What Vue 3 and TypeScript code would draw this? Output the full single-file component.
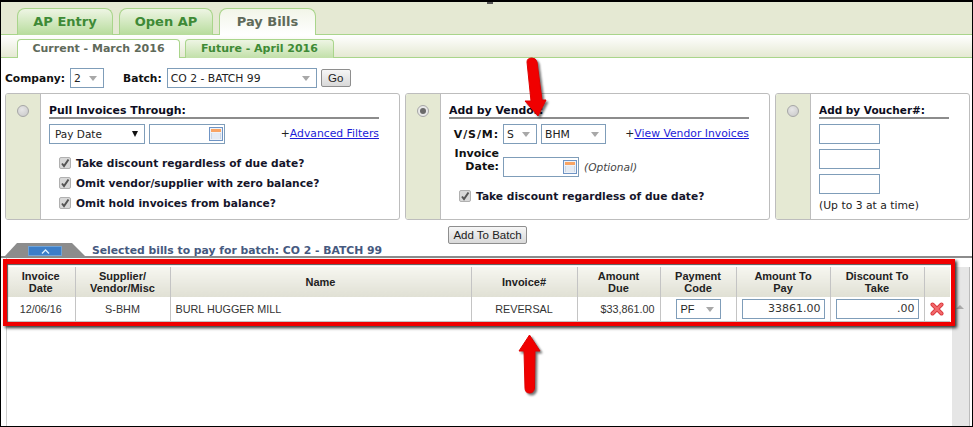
<script setup lang="ts">
const mainTabs = [
  { label: 'AP Entry', active: false },
  { label: 'Open AP', active: false },
  { label: 'Pay Bills', active: true },
]
const subTabs = [
  { label: 'Current - March 2016', active: true },
  { label: 'Future - April 2016', active: false },
]
const pullChecks = [
  'Take discount regardless of due date?',
  'Omit vendor/supplier with zero balance?',
  'Omit hold invoices from balance?',
]
</script>

<template>
  <div class="page">
    <span class="blip"></span>
    <div class="main-tabs">
      <div v-for="t in mainTabs" :key="t.label" class="main-tab" :class="{ active: t.active }">{{ t.label }}</div>
    </div>
    <div class="sub-tabs">
      <div v-for="t in subTabs" :key="t.label" class="sub-tab" :class="{ active: t.active }">{{ t.label }}</div>
    </div>

    <div class="toolbar">
      <b>Company:</b>
      <div class="sel sel-company">2<i class="caret"></i></div>
      <b class="batch-label">Batch:</b>
      <div class="sel sel-batch">CO 2 - BATCH 99<i class="caret"></i></div>
      <div class="btn btn-go">Go</div>
    </div>

    <div class="panels">
      <section class="panel p1">
        <div class="strip"><span class="radio"></span></div>
        <div class="body">
          <h4>Pull Invoices Through:</h4>
          <div class="row">
            <div class="sel sel-paydate">Pay Date<i class="black-caret"></i></div>
            <div class="date date-pull">
              <svg class="cal" width="14" height="14" viewBox="0 0 14 14">
                <rect x="0.5" y="0.5" width="13" height="13" fill="#eef2f8" stroke="#6f94c4" />
                <rect x="2" y="2" width="10" height="3" fill="#f9a463" />
                <path d="M2 7h10M2 9h10M2 11h10" stroke="#a9bbd2" fill="none" />
                <path d="M4 6v6M6 6v6M8 6v6M10 6v6" stroke="#fff" fill="none" />
              </svg>
            </div>
            <span class="link-wrap">+<a>Advanced Filters</a></span>
          </div>
          <div class="checks">
            <label v-for="c in pullChecks" :key="c" class="check">
              <span class="box"><svg width="10" height="10" viewBox="0 0 10 10"><path d="M2 5.500 4 8 8.500 1.500" fill="none" stroke="#555" stroke-width="2" /></svg></span>{{ c }}
            </label>
          </div>
        </div>
      </section>

      <section class="panel p2">
        <div class="strip"><span class="radio on"></span></div>
        <div class="body">
          <h4>Add by Vendor:</h4>
          <div class="row vsm-row">
            <b class="lbl vsm-lbl">V/S/M:</b>
            <div class="sel sel-s">S<i class="caret"></i></div>
            <div class="sel sel-bhm">BHM<i class="caret"></i></div>
            <span class="link-wrap">+<a>View Vendor Invoices</a></span>
          </div>
          <div class="row inv-row">
            <b class="lbl inv-lbl">Invoice<br />Date:</b>
            <div class="date date-inv">
              <svg class="cal" width="14" height="14" viewBox="0 0 14 14">
                <rect x="0.5" y="0.5" width="13" height="13" fill="#eef2f8" stroke="#6f94c4" />
                <rect x="2" y="2" width="10" height="3" fill="#f9a463" />
                <path d="M2 7h10M2 9h10M2 11h10" stroke="#a9bbd2" fill="none" />
                <path d="M4 6v6M6 6v6M8 6v6M10 6v6" stroke="#fff" fill="none" />
              </svg>
            </div>
            <em>(Optional)</em>
          </div>
          <label class="check single">
            <span class="box"><svg width="10" height="10" viewBox="0 0 10 10"><path d="M2 5.500 4 8 8.500 1.500" fill="none" stroke="#555" stroke-width="2" /></svg></span>Take discount regardless of due date?
          </label>
        </div>
      </section>

      <section class="panel p3">
        <div class="strip"><span class="radio"></span></div>
        <div class="body">
          <h4 class="short">Add by Voucher#:</h4>
          <div class="voucher"></div>
          <div class="voucher"></div>
          <div class="voucher"></div>
          <div class="hint">(Up to 3 at a time)</div>
        </div>
      </section>
    </div>

    <div class="add-row"><div class="btn btn-add">Add To Batch</div></div>

    <div class="selected-head">
      <div class="collapse">
        <div class="collapse-btn">
          <svg width="9" height="5" viewBox="0 0 9 5"><path d="M1 4.500 4.500 1 8 4.500" fill="none" stroke="#dff0ff" stroke-width="1.300" /></svg>
        </div>
      </div>
      <div class="selected-title">Selected bills to pay for batch: CO 2 - BATCH 99</div>
    </div>

    <div class="grid-area">
      <div class="grid-wrap">
        <table class="grid">
          <colgroup>
            <col class="c1" /><col class="c2" /><col class="c3" />
            <col class="c4" /><col class="c5" /><col class="c6" />
            <col class="c7" /><col class="c7" /><col class="c8" />
          </colgroup>
          <thead>
            <tr>
              <th>Invoice<br />Date</th>
              <th>Supplier/<br />Vendor/Misc</th>
              <th>Name</th>
              <th>Invoice#</th>
              <th>Amount<br />Due</th>
              <th>Payment<br />Code</th>
              <th>Amount To<br />Pay</th>
              <th>Discount To<br />Take</th>
              <th></th>
            </tr>
          </thead>
          <tbody>
            <tr>
              <td>12/06/16</td>
              <td>S-BHM</td>
              <td class="left">BURL HUGGER MILL</td>
              <td>REVERSAL</td>
              <td class="right">$33,861.00</td>
              <td><div class="sel sel-pf">PF<i class="caret"></i></div></td>
              <td><div class="amt">33861.00</div></td>
              <td><div class="amt">.00</div></td>
              <td>
                <svg class="del" width="14" height="14" viewBox="0 0 14 14">
                  <path d="M2.500 2.500 11.500 11.500M11.500 2.500 2.500 11.500" stroke="#d9363a" stroke-width="4" stroke-linecap="round" />
                  <path d="M2.500 2.500 11.500 11.500M11.500 2.500 2.500 11.500" stroke="#f2696c" stroke-width="2.400" stroke-linecap="round" />
                </svg>
              </td>
            </tr>
          </tbody>
        </table>
        <div class="red-box"></div>
      </div>
      <div class="scroll"><span class="scroll-up"></span></div>
    </div>

    <!-- annotation arrows -->
    <svg class="arrow arrow-down" width="32" height="70" viewBox="0 0 32 70">
      <path d="M7 7Q7 3 12 3 16 3 17 7L22 45 26 45 18 61 5 46 11 46Z" fill="#f00000" stroke="#e00000" stroke-linejoin="round" />
    </svg>
    <svg class="arrow arrow-up" width="32" height="70" viewBox="0 0 32 70">
      <path d="M14.500 5 25 21 20 21 19.500 58Q19 63 14.500 63 10 63 10 58L9 21 4 21Z" fill="#f00000" stroke="#e00000" stroke-linejoin="round" />
    </svg>
  </div>
</template>

<style>
body { margin: 0; background: #000; }
</style>

<style scoped>
.page {
  position: relative;
  width: 973px;
  height: 427px;
  box-sizing: border-box;
  border-style: solid;
  border-color: #000;
  border-width: 2px 1px 1px 1px;
  background: #fff;
  overflow: hidden;
  font-family: "DejaVu Sans", Verdana, sans-serif;
  font-size: 11px;
  color: #111;
}
.blip {
  position: absolute;
  left: 486px;
  top: 0;
  width: 6px;
  height: 2px;
  background: #555;
}

.main-tabs {
  display: flex;
  gap: 6px;
  height: 33px;
  box-sizing: border-box;
  padding: 6px 0 0 16px;
  background: #e5e9d3;
  border-bottom: 1px solid #a9d58b;
}
.main-tab {
  width: 96px;
  height: 27px;
  box-sizing: border-box;
  border: 1px solid #a9d58b;
  border-bottom: 0;
  border-radius: 8px 8px 0 0;
  background: linear-gradient(#eef5e4, #b7dc9c);
  color: #3e8a36;
  font-size: 13px;
  font-weight: bold;
  text-align: center;
  line-height: 26px;
}
.main-tab:nth-child(2) { width: 94px; }
.main-tab:nth-child(3) { width: 97px; }
.main-tab.active {
  background: linear-gradient(#f2f5e8, #fff);
  color: #5f6a5a;
}

.sub-tabs {
  display: flex;
  gap: 5px;
  height: 23px;
  box-sizing: border-box;
  padding: 4px 0 0 16px;
  border-bottom: 1px solid #a9d58b;
  background: linear-gradient(#fff, #e5e9d3);
}
.sub-tab {
  width: 163px;
  height: 19px;
  box-sizing: border-box;
  border: 1px solid #a9d58b;
  border-bottom: 0;
  border-radius: 4px 4px 0 0;
  background: linear-gradient(#eef5e4, #c2e0a9);
  color: #3e8a36;
  font-size: 11px;
  font-weight: bold;
  text-align: center;
  line-height: 17px;
}
.sub-tab:nth-child(2) { width: 149px; }
.sub-tab.active {
  background: #fff;
  color: #5f6a5a;
}

.toolbar {
  display: flex;
  align-items: center;
  height: 20px;
  margin-top: 10px;
  padding-left: 4px;
}
.toolbar b { font-size: 10.7px; }
.batch-label { margin-left: 19px; }

.sel {
  position: relative;
  display: flex;
  align-items: center;
  box-sizing: border-box;
  height: 20px;
  border: 1px solid #7f9db9;
  background: #fff;
  padding-left: 3px;
  font-size: 10.8px;
  color: #222;
}
.caret {
  position: absolute;
  right: 6px;
  top: 7px;
  width: 0;
  height: 0;
  border-left: 4px solid transparent;
  border-right: 4px solid transparent;
  border-top: 5px solid #a8a8a8;
}
.sel-company { width: 34px; margin-left: 5px; }
.sel-batch { width: 150px; margin-left: 5px; }
.btn {
  box-sizing: border-box;
  display: flex;
  align-items: center;
  justify-content: center;
  height: 18px;
  border: 1px solid #8e8e8e;
  border-radius: 2px;
  background: linear-gradient(#f6f6f6, #d9d9d9);
  font-family: "Liberation Sans", Arial, sans-serif;
  font-size: 11.5px;
  color: #222;
}
.btn-go { width: 30px; margin-left: 4px; }

.panels {
  display: flex;
  gap: 5px;
  margin-top: 5px;
  padding-left: 4px;
}
.panel {
  display: flex;
  box-sizing: border-box;
  height: 127px;
  border: 1px solid #bdbdbd;
  border-radius: 3px;
  overflow: hidden;
}
.p1 { width: 395px; }
.p2 { width: 365px; }
.p3 { width: 195px; }
.strip {
  flex: none;
  width: 35px;
  box-sizing: border-box;
  background: #e5e9d3;
  border-right: 1px solid #bdbdbd;
  padding: 11px 0 0 11px;
}
.radio {
  display: block;
  box-sizing: border-box;
  width: 12px;
  height: 12px;
  border-radius: 50%;
  border: 1px solid #a6a6a6;
  background: radial-gradient(circle at 40% 35%, #e6e6e6, #c8c8c8);
  position: relative;
}
.radio.on {
  background: #e8e8e8;
}
.radio.on::after {
  content: "";
  position: absolute;
  left: 2px;
  top: 2px;
  width: 6px;
  height: 6px;
  border-radius: 50%;
  background: #6a6a6a;
}
.body {
  flex: 1;
  padding: 9px 20px 0 8px;
  min-width: 0;
}
.p3 .body { padding-right: 0; }
h4 {
  margin: 0;
  height: 16px;
  box-sizing: border-box;
  border-bottom: 2px solid #8c8c8c;
  font-size: 10.9px;
  line-height: 15px;
  font-weight: bold;
  color: #0c0c20;
}
h4.short { width: 130px; font-size: 10.5px; }
.row {
  display: flex;
  align-items: center;
}
.p1 .row { margin-top: 5px; }
.sel-paydate { width: 96px; padding-left: 5px; font-size: 10.5px; }
.black-caret {
  position: absolute;
  right: 6px;
  top: 6px;
  width: 0;
  height: 0;
  border-left: 3.5px solid transparent;
  border-right: 3.5px solid transparent;
  border-top: 6px solid #111;
}
.date {
  position: relative;
  box-sizing: border-box;
  height: 20px;
  border: 1px solid #7f9db9;
  background: #fff;
}
.date-pull { width: 76px; margin-left: 4px; }
.date-inv { width: 76px; }
.cal { position: absolute; right: 1px; top: 2px; }
.link-wrap {
  margin-left: auto;
  margin-bottom: 2px;
  font-size: 10.8px;
  color: #222;
}
.link-wrap a {
  color: #1c1cd8;
  text-decoration: underline;
}
.checks {
  display: flex;
  flex-direction: column;
  gap: 6px;
  margin-top: 12px;
  padding-left: 10px;
}
.check {
  display: flex;
  align-items: center;
  height: 14px;
  font-size: 10.65px;
  font-weight: bold;
  color: #15152a;
}
.box {
  display: flex;
  align-items: center;
  justify-content: center;
  box-sizing: border-box;
  width: 12px;
  height: 12px;
  margin-right: 5px;
  border: 1px solid #b0b0b0;
  border-radius: 2px;
  background: #d8d8d8;
}
.lbl {
  width: 49px;
  text-align: right;
  line-height: 13px;
  font-size: 11px;
  flex: none;
}
.vsm-lbl { letter-spacing: 0.9px; }
.vsm-row { margin-top: 5px; padding-left: 1px; }
.vsm-row .sel-s { width: 34px; margin-left: 4px; }
.sel-bhm { width: 65px; margin-left: 4px; }
.inv-row { margin-top: 3px; padding-left: 1px; align-items: flex-end; }
.inv-lbl { margin-bottom: 4px; }
.inv-row .date { margin-left: 4px; }
em {
  margin-left: 5px;
  font-size: 10.6px;
  line-height: 20px;
  color: #444;
}
.single { margin-top: 12px; padding-left: 10px; }

.voucher {
  width: 61px;
  height: 20px;
  box-sizing: border-box;
  border: 1px solid #7f9db9;
  margin-top: 5px;
}
.hint {
  margin-top: 5px;
  font-size: 10.8px;
  color: #222;
}

.add-row {
  display: flex;
  padding-left: 447px;
  margin-top: 6px;
}
.btn-add { width: 79px; }

.selected-head {
  display: flex;
  height: 15px;
  margin-top: -1px;
  padding-left: 4px;
  border-bottom: 2px solid #8c8c8c;
  box-sizing: border-box;
}
.collapse {
  width: 80px;
  height: 13px;
  background: #8c8c8c;
  clip-path: polygon(12px 0, 67px 0, 80px 100%, 0 100%);
  display: flex;
  justify-content: center;
  padding-top: 3px;
  box-sizing: border-box;
}
.collapse-btn {
  width: 34px;
  height: 10px;
  box-sizing: border-box;
  border: 1px solid #6fa3d8;
  background: #3c7ec8;
  display: flex;
  align-items: center;
  justify-content: center;
}
.selected-title {
  margin-left: 7px;
  font-size: 10.8px;
  font-weight: bold;
  color: #46597f;
  line-height: 15px;
}

.grid-area {
  display: flex;
  height: 170px;
  margin-left: 5px;
  border-left: 1px solid #cfcfcf;
}
.grid-wrap {
  position: relative;
  flex: none;
  width: 945px;
  box-sizing: border-box;
  padding: 9px 0 0 0;
}
.grid {
  border-collapse: collapse;
  table-layout: fixed;
  width: 943px;
  font-family: "Liberation Sans", Arial, sans-serif;
  font-size: 10.8px;
}
.c1 { width: 68px; }
.c2 { width: 95px; }
.c3 { width: 301px; }
.c4 { width: 106px; }
.c5 { width: 83px; }
.c6 { width: 76px; }
.c7 { width: 94px; }
.c8 { width: 26px; }
.grid th {
  height: 30px;
  padding: 0;
  border-right: 1px solid #c4c4c4;
  background: linear-gradient(#f6f6f0, #e0e0d4);
  font-size: 11px;
  font-weight: bold;
  line-height: 12px;
  color: #222;
  text-align: center;
}
.grid td {
  height: 24px;
  padding: 0;
  border-right: 1px solid #c4c4c4;
  border-bottom: 1px solid #c4c4c4;
  text-align: center;
  color: #333;
}
.grid th:last-child, .grid td:last-child { border-right: 0; }
.grid td.left { text-align: left; padding-left: 5px; }
.grid td.right { text-align: right; padding-right: 5px; }
.sel-pf {
  width: 45px;
  margin: 0 auto;
  font-family: "Liberation Sans", sans-serif;
  font-size: 11px;
  padding-left: 4px;
}
.amt {
  box-sizing: border-box;
  width: 83px;
  height: 20px;
  margin: 0 auto;
  border: 1px solid #7f9db9;
  text-align: right;
  padding-right: 3px;
  line-height: 18px;
  font-family: "DejaVu Sans", sans-serif;
  font-size: 11px;
  color: #333;
}
.del { display: block; margin: 0 auto; }

.red-box {
  position: absolute;
  left: -4px;
  top: 1px;
  width: 952px;
  height: 67px;
  box-sizing: border-box;
  border-style: solid;
  border-color: #f00000;
  border-width: 5px 4px 4px 4px;
  box-shadow: inset 1px 1px 1px #555, 2px 2px 3px #333;
  pointer-events: none;
}
.scroll {
  flex: none;
  width: 18px;
  box-sizing: border-box;
  margin-top: 9px;
  background: #e6e6e6;
  border-right: 1px solid #bbb;
}
.scroll-up {
  display: block;
  width: 0;
  height: 0;
  margin: 38px 0 0 4px;
  border-left: 4px solid transparent;
  border-right: 4px solid transparent;
  border-bottom: 4px solid #aaa;
}

.arrow {
  position: absolute;
  filter: drop-shadow(2px 2px 1px rgba(0, 0, 0, 0.55));
}
.arrow-down { left: 519px; top: 53px; }
.arrow-up { left: 514px; top: 328px; }
</style>
